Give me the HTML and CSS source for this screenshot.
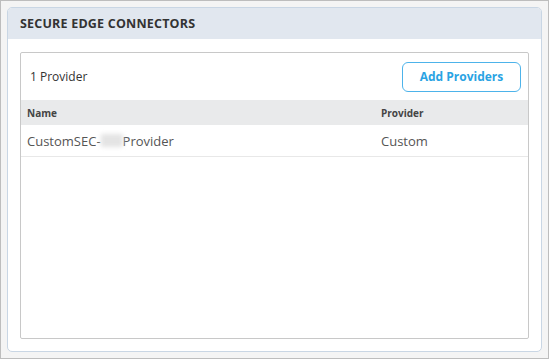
FILE: index.html
```html
<!DOCTYPE html>
<html>
<head>
<meta charset="utf-8">
<link rel="stylesheet" href="styles.css">
</head>
<body>
<div class="page">
  <div class="card">
    <div class="card-header">SECURE EDGE CONNECTORS</div>
    <div class="card-body">
      <div class="panel">
        <div class="toolbar">
          <span class="count">1 Provider</span>
          <button class="btn-add">Add Providers</button>
        </div>
        <div class="table">
          <div class="row head">
            <div class="cell name">Name</div>
            <div class="cell prov">Provider</div>
          </div>
          <div class="row data">
            <div class="cell name"><span>CustomSEC-</span><span class="blur"></span><span>Provider</span></div>
            <div class="cell prov">Custom</div>
          </div>
        </div>
      </div>
    </div>
  </div>
</div>
</body>
</html>
```
FILE: styles.css
```css
* { box-sizing: border-box; }
html, body { margin: 0; padding: 0; }
body { font-family: "Open Sans", "Noto Sans", sans-serif; }
.page {
  width: 549px;
  height: 359px;
  border: 1px solid #bdbdbd;
  background: #f4f4f4;
  padding: 6px 6px 6px 6px;
  display: flex;
}
.card {
  flex: 1;
  background: #fff;
  border: 1px solid #c9d6e4;
  border-radius: 5px;
  display: flex;
  flex-direction: column;
  overflow: hidden;
}
.card-header {
  height: 31px;
  background: #e1e7ef;
  padding-left: 12px;
  display: flex;
  align-items: center;
  font-weight: 700;
  font-size: 12.5px;
  letter-spacing: 0.2px;
  color: #333;
  padding-bottom: 1px;
}
.card-body {
  flex: 1;
  padding: 13px 12px 12px 12px;
  display: flex;
}
.panel {
  flex: 1;
  border: 1px solid #c8c8c8;
  border-radius: 2px;
  display: flex;
  flex-direction: column;
}
.toolbar {
  height: 47px;
  display: flex;
  align-items: center;
  justify-content: space-between;
  padding: 0 7px 0 9px;
}
.count { font-size: 12px; color: #333; }
.btn-add {
  width: 119px;
  height: 30px;
  border: 1px solid #4db3ea;
  border-radius: 6px;
  background: #fff;
  color: #2aa3e3;
  font-family: inherit;
  font-weight: 700;
  font-size: 12px;
  padding: 0;
}
.row {
  display: grid;
  grid-template-columns: 354px 1fr;
  padding-left: 6px;
  align-items: center;
}
.row.head {
  height: 25px;
  background: #e9eaeb;
  font-size: 10px;
  font-weight: 700;
  color: #444;
}
.row.data {
  height: 32px;
  border-bottom: 1px solid #e8e8e8;
  font-size: 13px;
  color: #555;
}
.cell.name { display: flex; align-items: center; }
.blur {
  background: #e4e4e4;
  filter: blur(2px);
  display: inline-block;
  width: 22px;
  height: 13px;
}
```
